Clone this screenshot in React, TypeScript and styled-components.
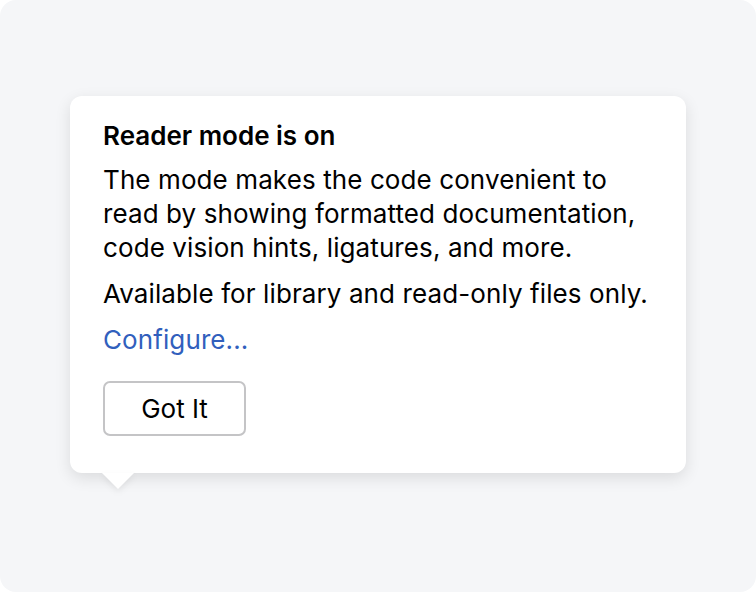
import styled, { createGlobalStyle } from 'styled-components';

const GlobalStyle = createGlobalStyle`
  html, body {
    margin: 0;
    padding: 0;
    background: #ffffff;
  }
  body {
    font-family: Inter, "Noto Sans", sans-serif;
  }
`;

const Frame = styled.div`
  width: 756px;
  height: 592px;
  box-sizing: border-box;
  background: #f5f6f8;
  border-radius: 16px;
  padding: 96px 70px 0 70px;
`;

const Popup = styled.div`
  position: relative;
  width: 616px;
  box-sizing: border-box;
  background: #ffffff;
  border-radius: 12px;
  padding: 23px 30px 37px 33px;
  box-shadow: 0 5px 16px rgba(0, 0, 0, 0.11);

  &::after {
    content: '';
    position: absolute;
    left: 32px;
    bottom: -16px;
    width: 0;
    height: 0;
    border-left: 16px solid transparent;
    border-right: 16px solid transparent;
    border-top: 16px solid #ffffff;
    filter: drop-shadow(0 3px 3px rgba(0, 0, 0, 0.07));
  }
`;

const Title = styled.h2`
  margin: 0 0 10px;
  font-size: 26px;
  line-height: 34px;
  font-weight: 600;
  color: #000000;
`;

const Text = styled.p`
  margin: 0 0 12px;
  font-size: 26px;
  line-height: 34px;
  letter-spacing: 0.1px;
  color: #000000;
`;

const Link = styled.a`
  display: block;
  font-size: 26px;
  line-height: 34px;
  letter-spacing: 0.1px;
  color: #315fbd;
  text-decoration: none;
  cursor: pointer;
`;

const Button = styled.button`
  display: block;
  margin-top: 24px;
  width: 143px;
  height: 55px;
  box-sizing: border-box;
  border: 2px solid #c4c4c6;
  border-radius: 7px;
  background: #ffffff;
  font-family: Inter, "Noto Sans", sans-serif;
  font-size: 26px;
  color: #000000;
  cursor: pointer;
`;

export default function App() {
  return (
    <>
      <GlobalStyle />
      <Frame>
        <Popup>
          <Title>Reader mode is on</Title>
          <Text>
            The mode makes the code convenient to
            <br />
            read by showing formatted documentation,
            <br />
            code vision hints, ligatures, and more.
          </Text>
          <Text>Available for library and read-only files only.</Text>
          <Link>Configure...</Link>
          <Button>Got It</Button>
        </Popup>
      </Frame>
    </>
  );
}
